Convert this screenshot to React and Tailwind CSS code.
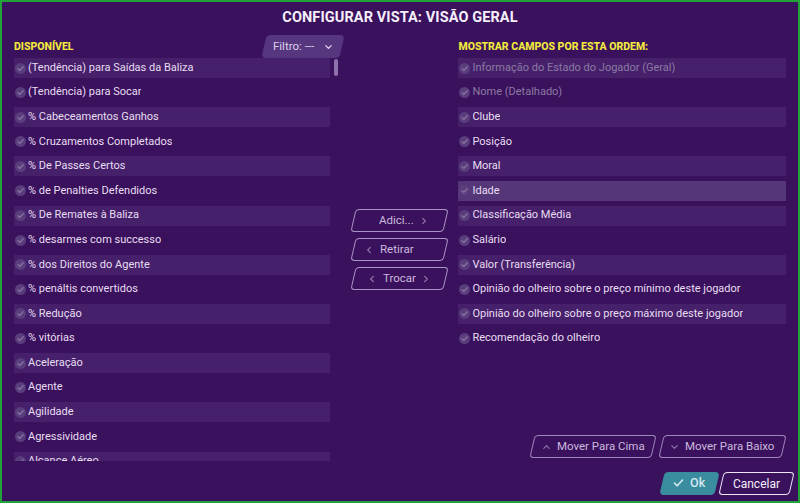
const leftItems = [
  '(Tendência) para Saídas da Baliza',
  '(Tendência) para Socar',
  '% Cabeceamentos Ganhos',
  '% Cruzamentos Completados',
  '% De Passes Certos',
  '% de Penalties Defendidos',
  '% De Remates à Baliza',
  '% desarmes com successo',
  '% dos Direitos do Agente',
  '% penáltis convertidos',
  '% Redução',
  '% vitórias',
  'Aceleração',
  'Agente',
  'Agilidade',
  'Agressividade',
  'Alcance Aéreo',
];

const rightItems = [
  { label: 'Informação do Estado do Jogador (Geral)', disabled: true },
  { label: 'Nome (Detalhado)', disabled: true },
  { label: 'Clube' },
  { label: 'Posição' },
  { label: 'Moral' },
  { label: 'Idade', selected: true },
  { label: 'Classificação Média' },
  { label: 'Salário' },
  { label: 'Valor (Transferência)' },
  { label: 'Opinião do olheiro sobre o preço mínimo deste jogador' },
  { label: 'Opinião do olheiro sobre o preço máximo deste jogador' },
  { label: 'Recomendação do olheiro' },
];

const CheckDot = () => (
  <svg width="11" height="11" viewBox="0 0 11 11" className="shrink-0">
    <circle cx="5.5" cy="5.5" r="5.5" fill="#5a3d7c" />
    <path d="M3 5.8 L4.8 7.5 L8.2 3.8" fill="none" stroke="#86709f" strokeWidth="1.3" strokeLinecap="round" strokeLinejoin="round" />
  </svg>
);

const Row = ({ label, index, disabled, selected }) => {
  const bg = selected ? 'bg-[#553679]' : index % 2 === 0 ? 'bg-[#46206b]' : 'bg-transparent';
  return (
    <div className={`flex items-center h-[20px] mb-[4.6px] pl-[1px] gap-[2px] shrink-0 ${bg}`}>
      <CheckDot />
      <span className={`truncate ${disabled ? 'text-[#8c7aa3]' : 'text-[#e8def1]'}`}>{label}</span>
    </div>
  );
};

const Chevron = ({ dir = 'right', className = '' }) => {
  const d = {
    right: 'M3 2 L6 5 L3 8',
    left: 'M6 2 L3 5 L6 8',
    down: 'M2 3.5 L5 6.5 L8 3.5',
    up: 'M2 6.5 L5 3.5 L8 6.5',
  }[dir];
  return (
    <svg width="9" height="10" viewBox="0 0 10 10" className={className}>
      <path d={d} fill="none" stroke="currentColor" strokeWidth="1.3" strokeLinecap="round" strokeLinejoin="round" />
    </svg>
  );
};

const SkewButton = ({ className = '', children }) => (
  <div className={`-skew-x-[13deg] rounded-[4px] flex items-center justify-center ${className}`}>
    <div className="skew-x-[13deg] flex items-center gap-[6px]">{children}</div>
  </div>
);

export default function App() {
  return (
    <div
      className="w-[800px] h-[503px] border-2 border-[#22a03a] bg-[#3a115d] flex flex-col overflow-hidden text-[11px]"
      style={{ fontFamily: 'Roboto, "Noto Sans", sans-serif' }}
    >
      <div className="h-[32px] flex items-center justify-center font-bold text-[14.5px] text-[#f4effa] tracking-[0.1px]">
        CONFIGURAR VISTA: VISÃO GERAL
      </div>

      <div className="h-[429px] flex px-[12px]">
        {/* Disponível */}
        <div className="w-[330px] flex flex-col">
          <div className="h-[24px] flex items-center justify-between">
            <span className="font-extrabold text-[10.5px] text-[#f2ea3c] pt-[1px]">DISPONÍVEL</span>
            <SkewButton className="w-[78px] h-[23px] mr-[2px] bg-[#573680] text-[#ddd2ea] text-[11.5px]">
              <span>Filtro: ---</span>
              <Chevron dir="down" className="ml-[4px] text-[#e8e0f2]" />
            </SkewButton>
          </div>
          <div className="flex h-[403px]">
            <div className="w-[316px] flex flex-col overflow-hidden">
              {leftItems.map((label, i) => (
                <Row key={label} label={label} index={i} />
              ))}
            </div>
            <div className="ml-[4px] mt-[1px] w-[4px] h-[17px] rounded-[2px] bg-[#8d72ad]" />
          </div>
        </div>

        {/* Botões centrais */}
        <div className="ml-[9px] w-[93px] flex flex-col gap-[6px] pt-[175px] text-[#cbbadd] text-[11.5px]">
          <SkewButton className="h-[23px] border border-[#a994c4]">
            <span className="ml-[8px]">Adici...</span>
            <Chevron dir="right" className="text-[#8e78aa]" />
          </SkewButton>
          <SkewButton className="h-[23px] border border-[#a994c4]">
            <Chevron dir="left" className="text-[#8e78aa]" />
            <span>Retirar</span>
            <span className="w-[14px]" />
          </SkewButton>
          <SkewButton className="h-[23px] border border-[#a994c4]">
            <Chevron dir="left" className="text-[#8e78aa]" />
            <span>Trocar</span>
            <Chevron dir="right" className="text-[#8e78aa]" />
          </SkewButton>
        </div>

        {/* Ordem */}
        <div className="ml-[13px] w-[328px] flex flex-col">
          <div className="h-[24px] flex items-center">
            <span className="font-extrabold text-[10.5px] text-[#f2ea3c] pt-[1px]">MOSTRAR CAMPOS POR ESTA ORDEM:</span>
          </div>
          <div className="flex-1 flex flex-col">
            {rightItems.map((item, i) => (
              <Row key={item.label} index={i} {...item} />
            ))}
          </div>
          <div className="h-[23px] mb-[5px] flex justify-end gap-[7px] pr-[2px] text-[#cbbadd] text-[11.5px]">
            <SkewButton className="w-[122px] h-[23px] border border-[#9d87b9]">
              <Chevron dir="up" className="text-[#8e78aa]" />
              <span>Mover Para Cima</span>
            </SkewButton>
            <SkewButton className="w-[123px] h-[23px] border border-[#9d87b9]">
              <Chevron dir="down" className="text-[#8e78aa]" />
              <span>Mover Para Baixo</span>
            </SkewButton>
          </div>
        </div>
      </div>

      <div className="pt-[9px] pr-[6px] flex justify-end gap-[4px]">
        <SkewButton className="w-[55px] h-[23px] bg-[#3a8c9f] text-[#d3e8ee] text-[12.5px]">
          <svg width="11" height="10" viewBox="0 0 11 10">
            <path d="M1.5 5.2 L4.2 7.8 L9.5 2" fill="none" stroke="#d3e8ee" strokeWidth="1.6" strokeLinecap="round" strokeLinejoin="round" />
          </svg>
          <span className="font-medium">Ok</span>
        </SkewButton>
        <SkewButton className="w-[71px] h-[23px] border border-[#ede6f5] text-[#f3eefa] text-[12px]">
          <span>Cancelar</span>
        </SkewButton>
      </div>
    </div>
  );
}
